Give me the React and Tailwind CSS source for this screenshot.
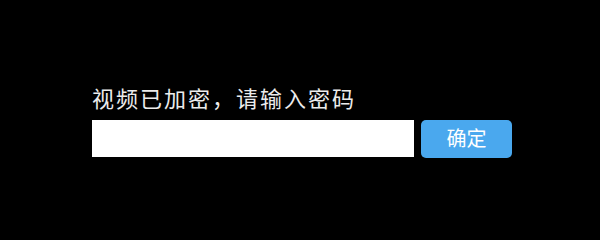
import React from "react";

const App = () => {
  return (
    <div
      className="w-[600px] h-[240px] bg-black flex items-center justify-center"
      style={{ fontFamily: '"Liberation Sans", "Noto Sans CJK SC", sans-serif' }}
    >
      <div className="flex flex-col pl-[4px] pt-[2px]">
        <div className="text-[22px] leading-[30px] text-[#ececec] tracking-[2px] mb-[5px]">
          视频已加密，请输入密码
        </div>
        <div className="flex items-start gap-[7px]">
          <input
            type="password"
            className="w-[322px] h-[37px] bg-white border-0 outline-none px-2"
          />
          <button className="w-[91px] h-[38px] rounded-[5px] bg-[#4aa8ee] text-white text-[20px] leading-[38px]">
            确定
          </button>
        </div>
      </div>
    </div>
  );
};

export default App;
